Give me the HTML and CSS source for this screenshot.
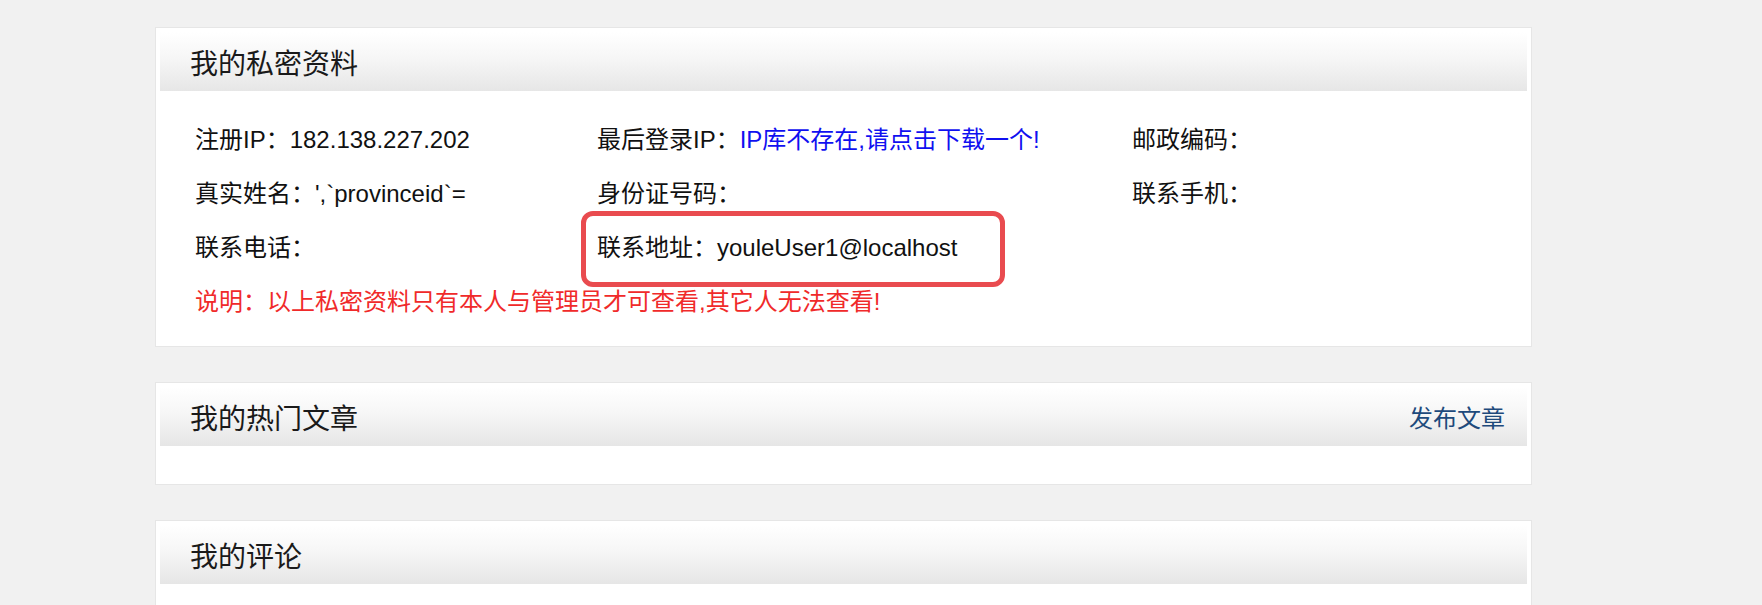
FILE: index.html
```html
<!DOCTYPE html>
<html lang="zh-CN">
<head>
<meta charset="utf-8">
<title>我的私密资料</title>
<link rel="stylesheet" href="styles.css">
</head>
<body>
<div class="page">
  <section class="card">
    <div class="card-head"><h2 class="card-title">我的私密资料</h2></div>
    <div class="card-body private">
      <div class="info-grid">
        <div class="cell">注册IP：182.138.227.202</div>
        <div class="cell">最后登录IP：<span class="blue">IP库不存在,请点击下载一个!</span></div>
        <div class="cell">邮政编码：</div>
        <div class="cell">真实姓名：',`provinceid`=</div>
        <div class="cell">身份证号码：</div>
        <div class="cell">联系手机：</div>
        <div class="cell">联系电话：</div>
        <div class="cell marked">联系地址：youleUser1@localhost<span class="highlight"></span></div>
        <div class="cell"></div>
      </div>
      <div class="note">说明：以上私密资料只有本人与管理员才可查看,其它人无法查看!</div>
    </div>
  </section>

  <section class="card">
    <div class="card-head"><h2 class="card-title">我的热门文章</h2><a class="head-link" href="#">发布文章</a></div>
    <div class="card-body empty"></div>
  </section>

  <section class="card">
    <div class="card-head"><h2 class="card-title">我的评论</h2></div>
    <div class="card-body empty"></div>
  </section>
</div>
</body>
</html>
```

FILE: styles.css
```css
html, body {
  margin: 0;
  padding: 0;
  background: #f1f1f1;
}
body {
  font-family: "Liberation Sans", "Noto Sans CJK SC", sans-serif;
  color: #111;
  overflow: hidden;
}
.page {
  padding: 27px 0 0 155px;
  width: 1377px;
  display: flex;
  flex-direction: column;
  gap: 35px;
}
.card {
  background: #fff;
  border: 1px solid #e6e6e6;
  padding: 4px;
}
.card-head {
  height: 59px;
  display: flex;
  align-items: center;
  justify-content: space-between;
  padding: 0 22px 0 30px;
  background: linear-gradient(to bottom, #ffffff 0%, #f6f6f6 45%, #e6e6e6 100%);
}
.card-title {
  margin: 0;
  font-size: 28px;
  font-weight: normal;
  color: #1a1a1a;
  font-family: "Noto Sans CJK SC", sans-serif;
}
.head-link {
  font-size: 24px;
  color: #1e4a7c;
  text-decoration: none;
  font-family: "Noto Sans CJK SC", sans-serif;
}
.card-body.private {
  padding: 22px 0 13px 35px;
}
.card-body.empty {
  min-height: 34px;
}
.info-grid {
  display: grid;
  grid-template-columns: 402px 535px 1fr;
}
.cell {
  height: 54px;
  line-height: 54px;
  font-size: 24px;
  white-space: nowrap;
}
.blue {
  color: #1010f0;
}
.marked {
  position: relative;
}
.highlight {
  position: absolute;
  left: -16px;
  top: -10px;
  width: 414px;
  height: 66px;
  border: 5px solid #e94b4f;
  border-radius: 12px;
}
.note {
  height: 54px;
  line-height: 54px;
  font-size: 24px;
  color: #f02a2a;
}
```
